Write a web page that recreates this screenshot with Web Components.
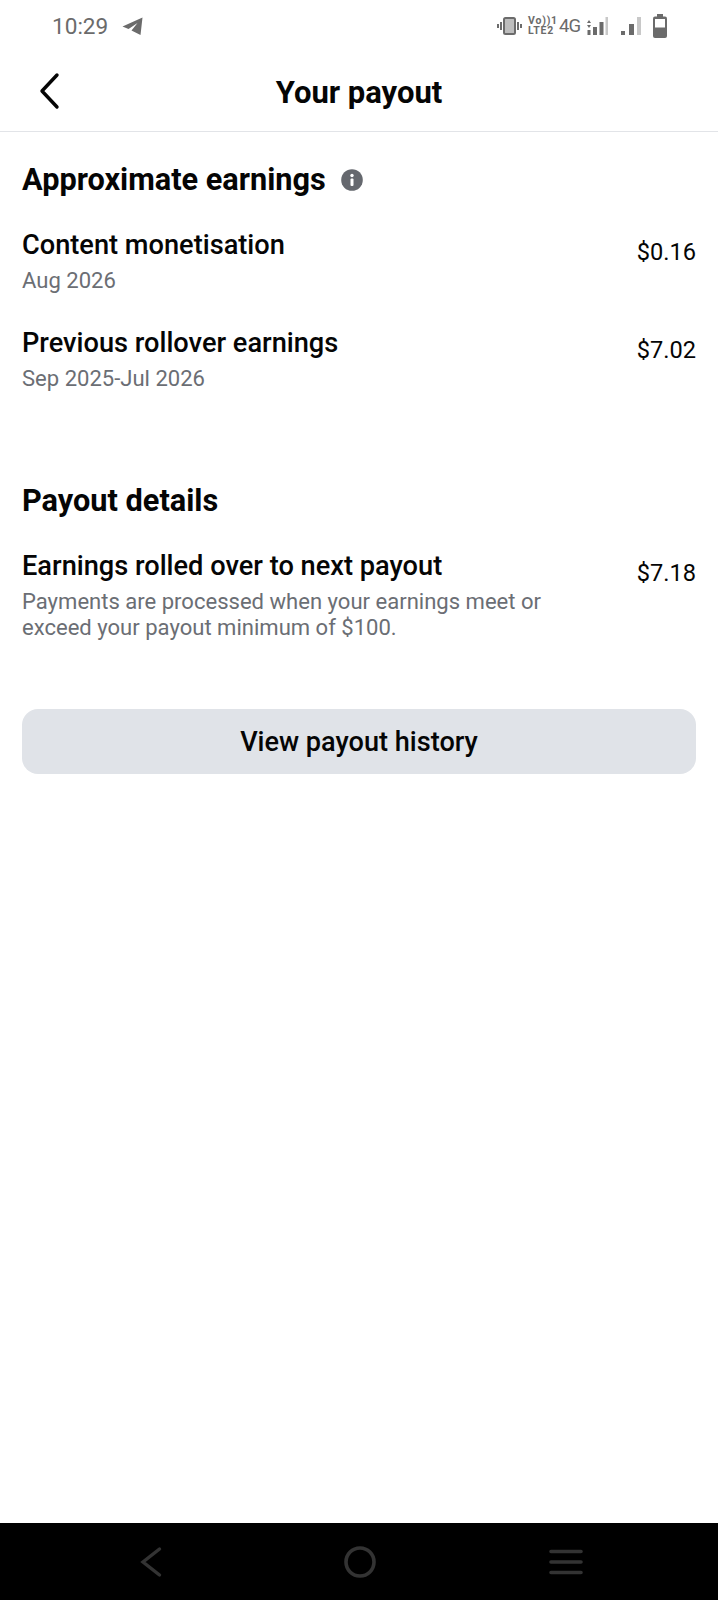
<!DOCTYPE html>
<html>
<head>
<meta charset="utf-8">
<style>
  html, body { margin: 0; background: #fff; }
  body { font-family: Roboto, sans-serif; color: #050505; }
  #app { display: flex; flex-direction: column; height: 1600px; }
</style>
</head>
<body>
<div id="app">
  <status-bar></status-bar>
  <top-bar>Your payout</top-bar>
  <main style="flex:1; padding: 0 22px; display:flex; flex-direction:column;">
    <section-title info style="margin-top:28px">Approximate earnings</section-title>
    <payout-row amount="$0.16" style="margin-top:27px">Content monetisation<span slot="sub">Aug 2026</span></payout-row>
    <payout-row amount="$7.02" style="margin-top:31px">Previous rollover earnings<span slot="sub">Sep 2025-Jul 2026</span></payout-row>
    <section-title style="margin-top:89px">Payout details</section-title>
    <payout-row amount="$7.18" style="margin-top:27px">Earnings rolled over to next payout<span slot="sub">Payments are processed when your earnings meet or<br>exceed your payout minimum of $100.</span></payout-row>
    <wide-button style="margin-top:68px">View payout history</wide-button>
  </main>
  <nav-bar></nav-bar>
</div>

<script>
  class StatusBar extends HTMLElement {
    constructor() {
      super();
      this.attachShadow({ mode: "open" });
    }
    connectedCallback() {
      this.shadowRoot.innerHTML = `
        <style>
          :host { display: flex; height: 52px; align-items: center; justify-content: space-between; padding: 0 51px 0 52px; color: #6b6b6b; }
          .left { display: flex; align-items: center; gap: 14px; font-size: 22.6px; }
          .right { display: flex; align-items: center; }
          .lte { display: flex; flex-direction: column; width: 25px; margin-left: 6px; font: 700 10.5px/10.5px Roboto, sans-serif; letter-spacing: 0.8px; white-space: nowrap; }
          .g { font-size: 18.5px; font-weight: 400; margin-left: 6px; letter-spacing: -1px; white-space: nowrap; }
          svg { display: block; }
        </style>
        <div class="left">
          <span>10:29</span>
          <svg width="21" height="18" viewBox="0 0 21 18"><path d="M0.5 9.5 L20.5 0.5 L18.5 18 L9.5 13.5 L15.5 6 L6.5 12 Z" fill="#6b6b6b"/></svg>
        </div>
        <div class="right">
          <svg width="25" height="18" viewBox="0 0 25 18" fill="none" stroke="#6b6b6b">
            <rect x="7" y="1" width="11" height="16" rx="1.5" stroke-width="2" fill="#bdbdbd"/>
            <path d="M4 5v8M1 7v4M21 5v8M24 7v4" stroke-width="2"/>
          </svg>
          <span class="lte"><span>Vo))1</span><span>LTE2</span></span>
          <span class="g">4G</span>
          <svg width="21" height="19" viewBox="0 0 21 19" fill="#6b6b6b" style="margin-left:7px">
            <path d="M2 3l2 3h-4zM2 11l2-3h-4z"/>
            <rect x="0.5" y="13" width="3" height="5"/><rect x="6" y="10" width="4" height="8"/><rect x="12.5" y="5" width="4" height="13"/><rect x="18.5" y="0" width="2.5" height="18" fill="#c8c8c8"/>
          </svg>
          <svg width="20" height="19" viewBox="0 0 20 19" fill="#6b6b6b" style="margin-left:13px">
            <rect x="0" y="14" width="4" height="4"/><rect x="8" y="7" width="5" height="11"/><rect x="16" y="0" width="4" height="18" fill="#c8c8c8"/>
          </svg>
          <svg width="14" height="24" viewBox="0 0 14 24" style="margin-left:12px">
            <rect x="4" y="0" width="6" height="3" fill="#6b6b6b"/>
            <rect x="0" y="2.5" width="14" height="21.5" rx="2" fill="#6b6b6b"/>
            <rect x="2" y="5" width="10" height="8.5" fill="#fff"/>
          </svg>
        </div>
      `;
    }
  }
  customElements.define("status-bar", StatusBar);

  class TopBar extends HTMLElement {
    constructor() {
      super();
      this.attachShadow({ mode: "open" });
    }
    connectedCallback() {
      this.shadowRoot.innerHTML = `
        <style>
          :host { display: grid; grid-template-columns: 1fr auto 1fr; height: 80px; align-items: center; border-bottom: 1px solid #e2e4e8; padding-left: 36px; box-sizing: border-box; }
          .title { font-size: 31px; font-weight: 700; margin: 2px 0 0 -36px; }
          svg { display: block; margin-top: -2px; }
        </style>
        <svg width="26" height="38" viewBox="0 0 26 38" fill="none" stroke="#050505" stroke-width="3.4" stroke-linecap="round" stroke-linejoin="round"><path d="M21 3 L6 19 L21 35"/></svg>
        <span class="title"><slot></slot></span>
        <span></span>
      `;
    }
  }
  customElements.define("top-bar", TopBar);

  class SectionTitle extends HTMLElement {
    constructor() {
      super();
      this.attachShadow({ mode: "open" });
    }
    connectedCallback() {
      const info = this.hasAttribute("info")
        ? `<svg width="22" height="22" viewBox="0 0 22 22"><circle cx="11" cy="11" r="10.8" fill="#65686e"/><rect x="9.5" y="9.5" width="3" height="7.5" rx="1" fill="#fff"/><circle cx="11" cy="6.5" r="1.7" fill="#fff"/></svg>`
        : "";
      this.shadowRoot.innerHTML = `
        <style>
          :host { display: flex; align-items: center; gap: 15px; font-size: 30.7px; line-height: 40px; font-weight: 700; }
          svg { margin-top: -1px; }
        </style>
        <span><slot></slot></span>
        ${info}
      `;
    }
  }
  customElements.define("section-title", SectionTitle);

  class PayoutRow extends HTMLElement {
    constructor() {
      super();
      this.attachShadow({ mode: "open" });
    }
    connectedCallback() {
      const amount = this.getAttribute("amount") || "";
      this.shadowRoot.innerHTML = `
        <style>
          :host { display: flex; justify-content: space-between; align-items: flex-start; }
          .label { font-size: 27.2px; line-height: 36px; font-weight: 500; }
          .sub { font-size: 22.05px; line-height: 26px; color: #6b6e74; margin-top: 5px; }
          .amount { font-size: 23.6px; line-height: 36px; margin-top: 7px; }
        </style>
        <div>
          <div class="label"><slot></slot></div>
          <div class="sub"><slot name="sub"></slot></div>
        </div>
        <div class="amount">${amount}</div>
      `;
    }
  }
  customElements.define("payout-row", PayoutRow);

  class WideButton extends HTMLElement {
    constructor() {
      super();
      this.attachShadow({ mode: "open" });
    }
    connectedCallback() {
      this.shadowRoot.innerHTML = `
        <style>
          :host { display: flex; height: 65px; align-items: center; justify-content: center; background: #e0e3e8; border-radius: 16px; font-size: 27.1px; font-weight: 500; }
        </style>
        <slot></slot>
      `;
    }
  }
  customElements.define("wide-button", WideButton);

  class NavBar extends HTMLElement {
    constructor() {
      super();
      this.attachShadow({ mode: "open" });
    }
    connectedCallback() {
      this.shadowRoot.innerHTML = `
        <style>
          :host { display: flex; height: 77px; background: #000; align-items: center; padding-left: 140px; }
          svg { display: block; }
        </style>
        <svg width="22" height="32" viewBox="0 0 22 32" fill="none" stroke="#333" stroke-width="3.4" stroke-linecap="round"><path d="M19.5 3 L3 16 L19.5 29"/></svg>
        <svg width="32" height="32" viewBox="0 0 32 32" fill="none" stroke="#333" stroke-width="3.6" style="margin-left:182px"><circle cx="16" cy="16" r="14"/></svg>
        <svg width="34" height="28" viewBox="0 0 34 28" fill="none" stroke="#333" stroke-width="3.6" stroke-linecap="round" style="margin-left:173px"><path d="M2 3.5H32M2 14H32M2 24.5H32"/></svg>
      `;
    }
  }
  customElements.define("nav-bar", NavBar);
</script>
</body>
</html>
